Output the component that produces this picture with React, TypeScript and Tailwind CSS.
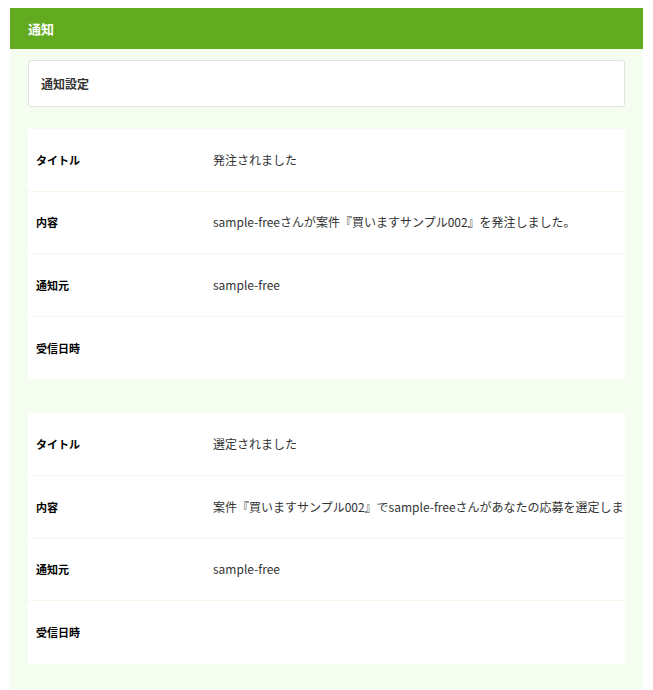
import React from "react";

interface Notice {
  title: string;
  body: string;
  from: string;
  receivedAt: string;
}

const notices: Notice[] = [
  {
    title: "発注されました",
    body: "sample-freeさんが案件『買いますサンプル002』を発注しました。",
    from: "sample-free",
    receivedAt: "",
  },
  {
    title: "選定されました",
    body: "案件『買いますサンプル002』でsample-freeさんがあなたの応募を選定しました。",
    from: "sample-free",
    receivedAt: "",
  },
];

const font = { fontFamily: '"Noto Sans CJK JP", "Noto Sans", sans-serif' };

const Row: React.FC<{ label: string; value: string; last?: boolean }> = ({ label, value, last }) => (
  <div className={`flex items-center h-[62.6px] ${last ? "" : "border-b border-[#f1fbea]"}`}>
    <div className="w-[185px] shrink-0 pl-[8px] text-[11px] font-bold text-black">{label}</div>
    <div className="flex-1 min-w-0 overflow-hidden whitespace-nowrap text-[12px] text-[#333]">{value}</div>
  </div>
);

const App: React.FC = () => {
  return (
    <div className="min-h-screen bg-white pt-[8px] px-[10px]" style={font}>
      <div className="bg-[#f5fdf0]">
        <div className="h-[41px] bg-[#62aa1f] flex items-center px-[18px] text-white text-[13px] font-bold">
          通知
        </div>
        <div className="px-[18px] pt-[11px] pb-[25px]">
          <div className="h-[47px] bg-white border border-[#dfe3e0] rounded-[3px] flex items-center px-[12px] text-[12px] font-bold text-[#333]">
            通知設定
          </div>
          {notices.map((n, idx) => (
            <div key={idx} className={`bg-white ${idx === 0 ? "mt-[22px]" : "mt-[34px]"}`}>
              <Row label="タイトル" value={n.title} />
              <Row label="内容" value={n.body} />
              <Row label="通知元" value={n.from} />
              <Row label="受信日時" value={n.receivedAt} last />
            </div>
          ))}
        </div>
      </div>
    </div>
  );
};

export default App;
